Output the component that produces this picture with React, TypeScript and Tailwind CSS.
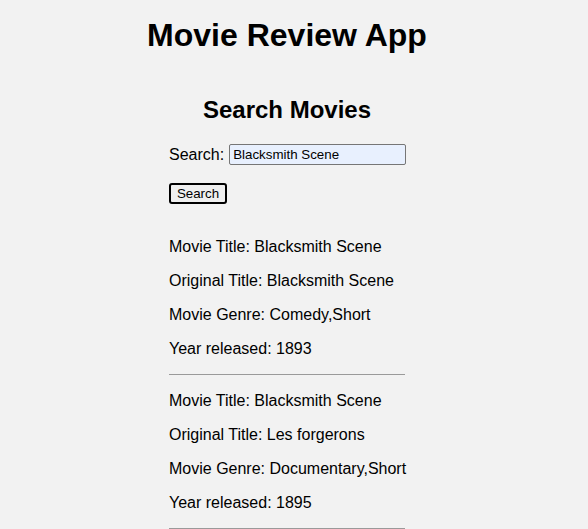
import React, { useState } from "react";

type Movie = {
  title: string;
  original: string;
  genre: string;
  year: number;
};

const MOVIES: Movie[] = [
  { title: "Blacksmith Scene", original: "Blacksmith Scene", genre: "Comedy,Short", year: 1893 },
  { title: "Blacksmith Scene", original: "Les forgerons", genre: "Documentary,Short", year: 1895 },
];

const App = () => {
  const [query, setQuery] = useState("Blacksmith Scene");

  return (
    <div className="min-h-[529px] bg-[#f2f2f2] text-black font-['Liberation_Sans',Arial,sans-serif]">
      <div className="w-[574px]">
        <h1 className="pt-[17px] text-center text-[32px] leading-[37px] font-bold">Movie Review App</h1>

        <div className="mx-auto mt-[42px] w-[236px]">
          <h2 className="text-center text-[24px] leading-[28px] font-bold">Search Movies</h2>

          {/* search form */}
          <div className="mt-[20px] flex items-center">
            <label className="text-[16px] leading-[18px] mr-[5px]">Search:</label>
            <input
              value={query}
              onChange={(e) => setQuery(e.target.value)}
              className="h-[21px] w-[177px] border border-[#767676] rounded-[2px] bg-[#e8f0fe] px-[3px] text-[13.33px] leading-[15px] outline-none"
            />
          </div>
          <button className="mt-[18px] h-[21px] w-[58px] border-2 border-black rounded-[3px] bg-[#efefef] text-[13.33px] leading-[15px]">
            Search
          </button>

          {/* results */}
          <div className="mt-[33px]">
            {MOVIES.map((m, i) => (
              <div key={i} className={i > 0 ? "mt-[17px]" : ""}>
                <div className="flex flex-col gap-[16px] text-[16px] leading-[18px] whitespace-nowrap">
                  <p>Movie Title: {m.title}</p>
                  <p>Original Title: {m.original}</p>
                  <p>Movie Genre: {m.genre}</p>
                  <p>Year released: {m.year}</p>
                </div>
                <hr className="mt-[16px] border-0 border-t border-[#9a9a9a]" />
              </div>
            ))}
          </div>
        </div>
      </div>
    </div>
  );
};

export default App;
